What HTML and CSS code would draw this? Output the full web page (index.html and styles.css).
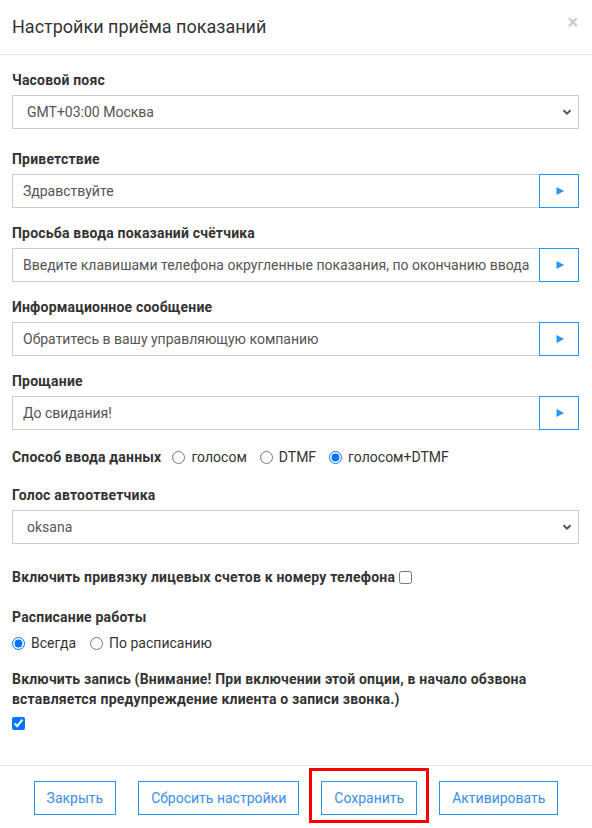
FILE: index.html
```html
<!DOCTYPE html>
<html lang="ru">
<head>
<meta charset="utf-8">
<title>Настройки приёма показаний</title>
<link rel="stylesheet" href="styles.css">
</head>
<body>
<div class="modal">
  <div class="modal-header">
    <h4 class="modal-title">Настройки приёма показаний</h4>
    <span class="close">×</span>
  </div>
  <div class="modal-body">
    <div class="group group-select">
      <label class="label">Часовой пояс</label>
      <div class="select-wrap">
        <select class="select"><option>GMT+03:00 Москва</option></select>
        <svg class="chevron" width="10" height="8" viewBox="0 0 10 8"><path d="M1.5 2.2 L5 5.6 L8.5 2.2" fill="none" stroke="#555" stroke-width="2"/></svg>
      </div>
    </div>
    <div class="group">
      <label class="label">Приветствие</label>
      <div class="input-group">
        <input class="input" type="text" value="Здравствуйте">
        <button class="play"><svg width="10" height="10" viewBox="0 0 10 10"><path d="M1.5 1 L9 5 L1.5 9 Z" fill="#2196f3"/></svg></button>
      </div>
    </div>
    <div class="group">
      <label class="label">Просьба ввода показаний счётчика</label>
      <div class="input-group">
        <input class="input" type="text" value="Введите клавишами телефона округленные показания, по окончанию ввода нажмите решетку">
        <button class="play"><svg width="10" height="10" viewBox="0 0 10 10"><path d="M1.5 1 L9 5 L1.5 9 Z" fill="#2196f3"/></svg></button>
      </div>
    </div>
    <div class="group">
      <label class="label">Информационное сообщение</label>
      <div class="input-group">
        <input class="input" type="text" value="Обратитесь в вашу управляющую компанию">
        <button class="play"><svg width="10" height="10" viewBox="0 0 10 10"><path d="M1.5 1 L9 5 L1.5 9 Z" fill="#2196f3"/></svg></button>
      </div>
    </div>
    <div class="group group-last-input">
      <label class="label">Прощание</label>
      <div class="input-group">
        <input class="input" type="text" value="До свидания!">
        <button class="play"><svg width="10" height="10" viewBox="0 0 10 10"><path d="M1.5 1 L9 5 L1.5 9 Z" fill="#2196f3"/></svg></button>
      </div>
    </div>
    <div class="row row-method">
      <span class="label-inline">Способ ввода данных</span>
      <label class="opt"><input type="radio" name="m" class="radio"><span>голосом</span></label>
      <label class="opt"><input type="radio" name="m" class="radio"><span>DTMF</span></label>
      <label class="opt"><input type="radio" name="m" class="radio" checked><span>голосом+DTMF</span></label>
    </div>
    <div class="group group-voice">
      <label class="label">Голос автоответчика</label>
      <div class="select-wrap">
        <select class="select"><option>oksana</option></select>
        <svg class="chevron" width="10" height="8" viewBox="0 0 10 8"><path d="M1.5 2.2 L5 5.6 L8.5 2.2" fill="none" stroke="#555" stroke-width="2"/></svg>
      </div>
    </div>
    <div class="row row-bind">
      <span class="label-inline">Включить привязку лицевых счетов к номеру телефона</span>
      <input type="checkbox" class="check">
    </div>
    <div class="group group-schedule">
      <label class="label">Расписание работы</label>
      <div class="row row-sched">
        <label class="opt opt-first"><input type="radio" name="s" class="radio" checked><span>Всегда</span></label>
        <label class="opt"><input type="radio" name="s" class="radio"><span>По расписанию</span></label>
      </div>
    </div>
    <div class="group group-record">
      <label class="label">Включить запись (Внимание! При включении этой опции, в начало обзвона вставляется предупреждение клиента о записи звонка.)</label>
      <input type="checkbox" class="check check-record" checked>
    </div>
  </div>
  <div class="modal-footer">
    <button class="btn">Закрыть</button>
    <button class="btn">Сбросить настройки</button>
    <button class="btn btn-marked">Сохранить</button>
    <button class="btn">Активировать</button>
  </div>
</div>
</body>
</html>
```

FILE: styles.css
```css
* { box-sizing: border-box; }
html, body { margin: 0; padding: 0; background: #fff; }
body {
  font-family: Roboto, "Noto Sans", "Liberation Sans", sans-serif;
  color: #333;
  font-size: 14px;
}
.modal {
  width: 592px;
  height: 828px;
  display: flex;
  flex-direction: column;
  background: #fff;
}
.modal-header {
  height: 55px;
  flex: none;
  display: flex;
  align-items: center;
  justify-content: space-between;
  padding: 0 12px 1px 12px;
  border-bottom: 1px solid #e5e5e5;
}
.modal-title {
  margin: 0;
  font-size: 18px;
  font-weight: 400;
  color: #333;
  line-height: 24px;
}
.close {
  font-size: 20px;
  font-weight: 700;
  color: #000;
  opacity: .2;
  line-height: 1;
  margin-top: -10px;
  margin-right: 2px;
}
.modal-body {
  flex: 1;
  padding: 15px 13px 0 12px;
}
.group { margin-bottom: 15px; }
.group-select { margin-bottom: 20px; }
.group-last-input { margin-bottom: 17px; }
.label {
  display: block;
  font-weight: 700;
  font-size: 14px;
  line-height: 20px;
  letter-spacing: 0.2px;
  margin-bottom: 5px;
  color: #333;
}
.label-inline {
  font-weight: 700;
  font-size: 14px;
  line-height: 20px;
  letter-spacing: 0.2px;
  color: #333;
}
.select-wrap { position: relative; }
.select {
  display: block;
  width: 100%;
  height: 34px;
  border: 1px solid #ccc;
  border-radius: 0;
  background: #fff;
  appearance: none;
  -webkit-appearance: none;
  padding: 0 30px 0 14px;
  font-family: inherit;
  font-size: 14px;
  color: #555;
}
.chevron {
  position: absolute;
  right: 7px;
  top: 13px;
  pointer-events: none;
}
.input-group {
  display: flex;
  height: 34px;
}
.input {
  flex: 1;
  min-width: 0;
  height: 34px;
  border: 1px solid #ccc;
  border-right: none;
  border-radius: 0;
  padding: 0 10px;
  font-family: inherit;
  font-size: 14px;
  color: #555;
  outline: none;
}
.play {
  width: 40px;
  height: 34px;
  flex: none;
  border: 1px solid #2196f3;
  background: #fff;
  padding: 0;
  display: flex;
  align-items: center;
  justify-content: center;
}
.play svg { display: block; margin-left: 2px; }
.row {
  display: flex;
  align-items: center;
}
.row-method { height: 20px; margin-bottom: 18px; }
.opt {
  display: flex;
  align-items: center;
  font-size: 14px;
  color: #333;
  line-height: 20px;
}
.opt span { margin-left: 3px; }
.radio {
  width: 13px;
  height: 13px;
  margin: 0 3px 0 11px;
}
.opt + .opt .radio { margin-left: 13px; }
.opt-first .radio { margin-left: 0; }
.group-voice { margin-bottom: 23px; }
.row-bind { height: 20px; margin-bottom: 20px; }
.check {
  width: 13px;
  height: 13px;
  margin: 0 0 0 4px;
}
.group-schedule { margin-bottom: 16px; }
.group-schedule .label { margin-bottom: 6px; }
.row-sched { height: 20px; }
.row-sched .opt + .opt .radio { margin-left: 14px; }
.group-record .label { margin-bottom: 8px; }
.check-record { display: block; margin: 0; }
.modal-footer {
  height: 63px;
  flex: none;
  border-top: 1px solid #e5e5e5;
  display: flex;
  justify-content: center;
  align-items: flex-start;
  gap: 22px;
  padding-top: 15px;
}
.btn {
  position: relative;
  height: 34px;
  padding: 0 12px;
  border: 1px solid #2196f3;
  background: #fff;
  color: #3a8ee6;
  font-family: inherit;
  font-size: 14px;
  border-radius: 0;
}
.btn-marked::after {
  content: "";
  position: absolute;
  left: -13px;
  right: -13px;
  top: -14px;
  bottom: -9px;
  border: 3px solid #f00;
}
```
